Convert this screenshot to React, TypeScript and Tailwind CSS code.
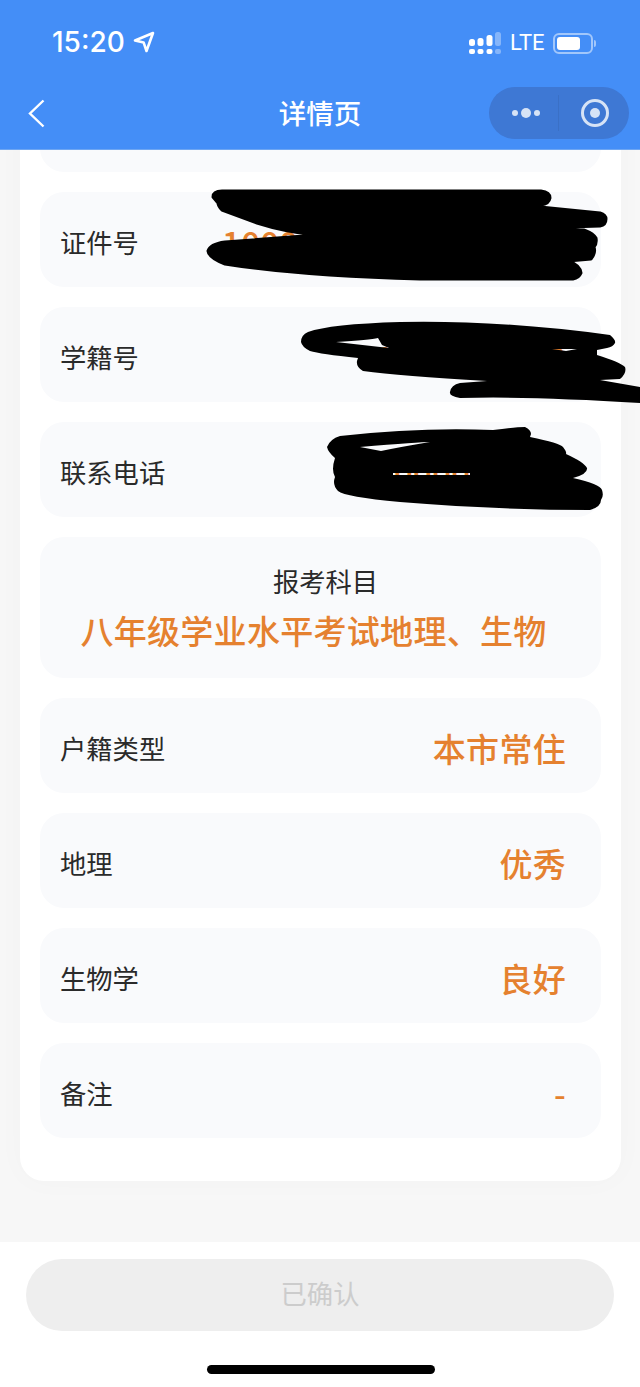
const FONT = "font-['Noto_Sans_CJK_SC','Noto_Sans',sans-serif]";

interface RowProps {
  label: string;
  value: string;
}

function Row({ label, value }: RowProps) {
  return (
    <div className="flex h-[95px] shrink-0 items-center justify-between rounded-[24px] bg-[#f9fafc] pl-5 pr-[35px] pt-[5px]">
      <span className="text-[26.3px] leading-none text-[#2a2a2a]">{label}</span>
      <span className="text-[33px] font-medium leading-none tracking-[0.3px] text-[#e5812f]">{value}</span>
    </div>
  );
}

function StatusBar() {
  return (
    <div className="flex h-[87px] items-start justify-between pl-[52px] pr-[44px] pt-[26px]">
      <div className="flex items-center gap-2">
        <span className="font-['Inter',sans-serif] text-[28px] font-medium leading-[32px] text-white">15:20</span>
        <svg width="22" height="22" viewBox="0 0 22 22" fill="none">
          <path d="M20 2 2 9.5l8.6 1.9L13.5 20z" stroke="#fff" strokeWidth="2.6" strokeLinejoin="round" />
        </svg>
      </div>
      <div className="flex items-center gap-[9px] pt-[5px]">
        <svg width="32" height="22" viewBox="0 0 32 22">
          <rect x="0" y="7" width="6" height="7" rx="2.5" fill="#fff" />
          <rect x="0" y="17" width="6" height="5" rx="2" fill="#fff" />
          <rect x="8.5" y="6" width="6" height="8" rx="2.5" fill="#fff" />
          <rect x="8.5" y="17" width="6" height="5" rx="2" fill="#fff" />
          <rect x="17.5" y="3" width="6" height="11" rx="2.5" fill="#fff" />
          <rect x="17.5" y="17" width="6" height="5" rx="2" fill="#fff" />
          <rect x="26" y="0" width="6" height="14" rx="2.5" fill="#fff" fillOpacity="0.35" />
          <rect x="26" y="17" width="6" height="5" rx="2" fill="#fff" fillOpacity="0.35" />
        </svg>
        <span className="w-[34px] font-['Roboto',sans-serif] text-[22px] leading-[24px] text-white">LTE</span>
        <div className="flex items-center gap-[1px]">
          <div className="h-[21px] w-[40px] rounded-[6px] border-2 border-white/50 p-[2px]">
            <div className="h-full w-[23px] rounded-[3px] bg-white" />
          </div>
          <div className="h-[7px] w-[2px] rounded-r-full bg-white/50" />
        </div>
      </div>
    </div>
  );
}

function NavBar() {
  return (
    <div className="relative flex h-[52px] items-center justify-between pl-[28px] pr-[11px]">
      <svg width="17" height="29" viewBox="0 0 17 29" fill="none">
        <path d="M15.5 1.5 2 14.5l13.5 13" stroke="#fff" strokeWidth="2.4" />
      </svg>
      <span className="absolute left-0 right-0 text-center text-[27.5px] font-medium leading-none text-white">详情页</span>
      <div className="relative flex h-[52px] w-[140px] items-center rounded-full bg-[#3e78d4]">
        <div className="flex w-[69px] items-center justify-end gap-[3px] pr-[18px]">
          <span className="h-[6px] w-[6px] rounded-full bg-[#d6e3f6]" />
          <span className="h-[10px] w-[10px] rounded-full bg-[#d6e3f6]" />
          <span className="h-[6px] w-[6px] rounded-full bg-[#d6e3f6]" />
        </div>
        <div className="h-[36px] w-px bg-[#3a70c6]" />
        <div className="ml-[22px] flex h-[28px] w-[28px] items-center justify-center rounded-full border-[3px] border-[#d6e3f6]">
          <span className="h-[10px] w-[10px] rounded-full bg-[#d6e3f6]" />
        </div>
      </div>
    </div>
  );
}

// the black marker strokes somebody drew over the id numbers
function Scribbles() {
  return (
    <svg className="pointer-events-none absolute left-0 top-0" width="640" height="520" viewBox="0 0 640 520">
      <path
        fill="#000"
        stroke="#000"
        strokeWidth="3"
        strokeLinejoin="round"
        d="M213 197Q213 191 222 191L541 191Q550 192 550 198Q549 204 541 205L520 205L600 213Q606 215 606 219Q606 225 600 226L568 227Q590 229 596 238Q597 244 594 247Q596 253 591 259L568 261Q580 265 581 273Q579 278 573 279L420 279Q300 276 225 264Q209 258 208 251Q210 244 225 242L317 235Q285 232 257 223L222 210Q218 206 218 203Z"
      />
      <path
        fill="#000"
        fillRule="evenodd"
        d="M301 342Q301 335 308 332Q330 324 400 322Q500 320 610 335Q616 340 615 343Q613 347 607 348L597 350L597 355Q620 362 625 367Q627 373 620 379L600 380L640 387L640 403Q530 396 460 398Q449 396 450 392Q451 385 460 383L487 381Q400 376 363 371Q356 367 357 361Q358 358 358 358Q320 354 310 351Q302 347 301 342ZM336 342Q370 340 378 338L382 345L389 348ZM552 349L577 349L566 351Z"
      />
      <path
        fill="#000"
        fillRule="evenodd"
        d="M327 447Q330 439 340 436Q420 427 493 430Q515 427 525 427Q531 430 531 434L530 437Q560 443 563 447Q567 452 566 454Q584 462 587 468Q588 474 573 478Q600 484 602 490Q604 496 601 500Q601 507 590 510Q500 510 400 502Q345 497 338 491Q332 485 335 477Q331 470 335 458Q328 452 327 447ZM360 447Q420 442 430 442Q400 447 381 451ZM393 473L470 473L470 475L393 475Z"
      />
    </svg>
  );
}

export default function App() {
  return (
    <div className={`${FONT} relative flex h-[1387px] w-[640px] flex-col overflow-hidden bg-white`}>
      <header className="relative z-10 h-[150px] shrink-0 border-b border-[#6ea6f2] bg-[#448ef7]">
        <StatusBar />
        <NavBar />
      </header>

      <main className="flex min-h-0 flex-1 flex-col justify-end overflow-hidden bg-[#f7f7f7] pb-[61px] pl-[20px] pr-[19px]">
        <div className="flex shrink-0 flex-col gap-5 rounded-[24px] bg-white px-5 pb-[43px] shadow-[0_0_30px_rgba(0,0,0,0.025)]">
          {/* row scrolled away under the header */}
          <div className="h-[95px] shrink-0 rounded-[24px] bg-[#f9fafc]" />
          <Row label="证件号" value="100000000000000000" />
          <Row label="学籍号" value="1000000000" />
          <Row label="联系电话" value="10000000000" />
          <div className="flex h-[140.8px] shrink-0 flex-col items-center rounded-[24px] bg-[#f9fafc] pt-[27px]">
            <span className="pl-[10px] text-[26.3px] leading-[34px] text-[#2a2a2a]">报考科目</span>
            <span className="mr-[14px] mt-[11px] text-[33px] font-medium leading-[42px] tracking-[0.3px] text-[#e5812f]">八年级学业水平考试地理、生物</span>
          </div>
          <Row label="户籍类型" value="本市常住" />
          <Row label="地理" value="优秀" />
          <Row label="生物学" value="良好" />
          <Row label="备注" value="-" />
        </div>
      </main>

      <footer className="flex h-[145px] shrink-0 flex-col items-center bg-white px-[26px] pt-[17px]">
        <button className="h-[72px] w-full rounded-full bg-[#eeeeee] pb-1 text-[26.3px] text-[#cccccc]">已确认</button>
        <div className="ml-[2px] mt-[34px] h-[9px] w-[228px] rounded-full bg-black" />
      </footer>

      <Scribbles />
    </div>
  );
}
